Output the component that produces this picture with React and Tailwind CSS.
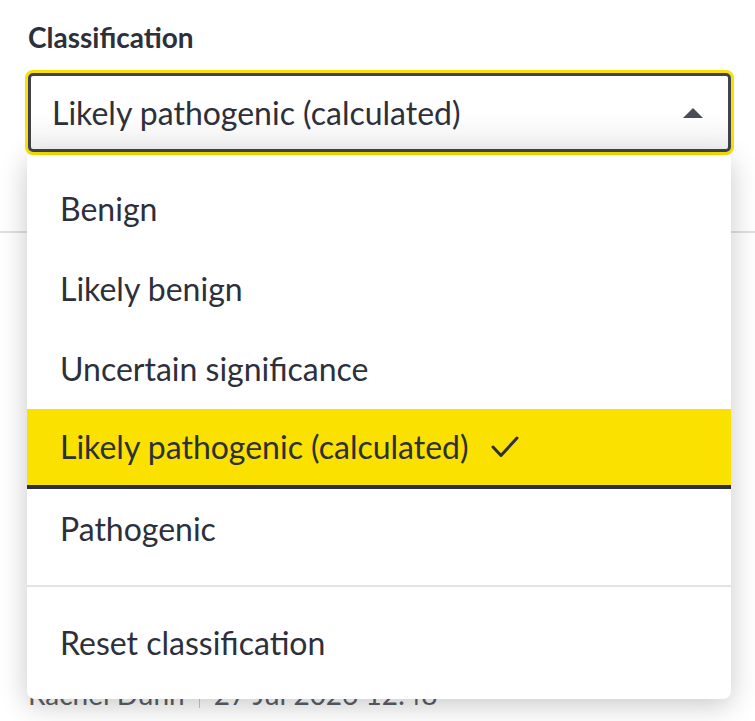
import React, { useState } from 'react';

const options = [
    'Benign',
    'Likely benign',
    'Uncertain significance',
    'Likely pathogenic (calculated)',
    'Pathogenic'
];

const CheckIcon = () => (
    <svg width="28" height="22" viewBox="0 0 28 22" fill="none">
        <polyline points="2,11 10,19.5 26,2" stroke="#2d303b" strokeWidth="3" strokeLinecap="round" strokeLinejoin="round" />
    </svg>
);

const App = () => {
    const [selected, setSelected] = useState('Likely pathogenic (calculated)');
    const [open, setOpen] = useState(true);

    return (
        <div className="relative h-[721px] overflow-hidden bg-white font-['Lato',sans-serif] text-[#2d303b]">
            <div className="px-[28px] pt-[19px]">
                <label className="block text-[28px] leading-[36px] font-bold">Classification</label>
                <button
                    type="button"
                    onClick={() => setOpen(!open)}
                    className="mt-[18px] flex h-[79px] w-[703px] items-center justify-between rounded-[5px] border-[3px] border-[#40434d] bg-linear-to-b from-white from-50% to-[#f1f1f1] pl-[21px] pr-[25px] text-[32px] leading-[40px] ring-[3px] ring-[#fae100]"
                >
                    <span>{selected}</span>
                    <span className="h-0 w-0 border-x-[10px] border-b-[10px] border-x-transparent border-b-[#4a4d57]"></span>
                </button>
            </div>

            <div className="mt-[79px] border-t-2 border-[#e0e0e0] px-[28px] pt-[443px]">
                <div className="flex items-center text-[28px] leading-[36px] text-[#5b5f69]">
                    <span>Rachel Dunn</span>
                    <span className="mx-[14px] h-[28px] w-px bg-[#c8c8c8]"></span>
                    <span>27 Jul 2026 12:48</span>
                </div>
            </div>

            {open && (
                <div className="absolute left-[27px] top-[155px] w-[704px] rounded-b-lg bg-white shadow-[0_6px_28px_rgba(0,0,0,0.22)]">
                    <ul className="pt-[14px] pb-4">
                        {options.map((opt) => (
                            <li
                                key={opt}
                                onClick={() => setSelected(opt)}
                                className={`flex h-[80px] cursor-pointer items-center gap-[22px] px-[33px] text-[32px] leading-[40px] ${selected === opt
                                    ? 'border-b-4 border-[#2b2e3b] bg-[#fae100]'
                                    : ''
                                    }`}
                            >
                                <span>{opt}</span>
                                {selected === opt && <CheckIcon />}
                            </li>
                        ))}
                    </ul>
                    <div className="h-[2px] bg-[#e3e3e3]"></div>
                    <div className="py-4">
                        <div className="flex h-[80px] cursor-pointer items-center px-[33px] text-[32px] leading-[40px]">
                            Reset classification
                        </div>
                    </div>
                </div>
            )}
        </div>
    );
};

export default App;
